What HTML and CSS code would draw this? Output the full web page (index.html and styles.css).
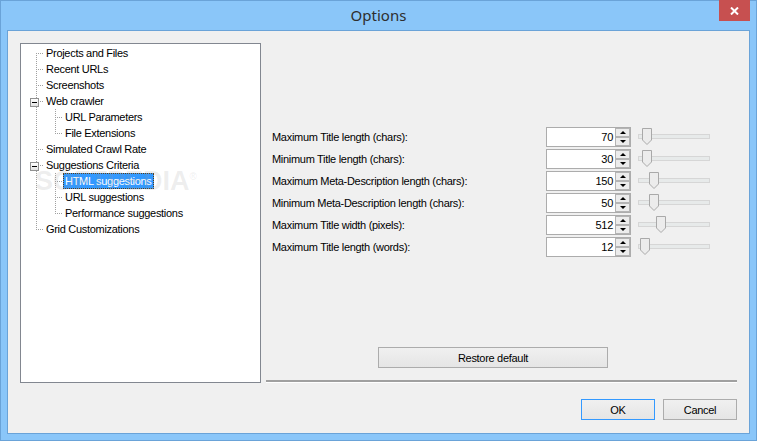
FILE: index.html
```html
<!DOCTYPE html>
<html lang="en">
<head>
<meta charset="UTF-8">
<meta name="viewport" content="width=device-width, initial-scale=1.0">
<title>Options</title>
<link rel="stylesheet" href="styles.css">
</head>
<body>

<div class="window">
    <div class="titlebar">
        <span class="title">Options</span>
        <button class="close" aria-label="Close">
            <svg width="9" height="8" viewBox="0 0 9 8"><path d="M1 0.5 L8 7.5 M8 0.5 L1 7.5" stroke="#fff" stroke-width="2"/></svg>
        </button>
    </div>

    <div class="client">
        <div class="main">
            <div class="tree">
                <div class="tree-row"><span class="guide first"></span><span class="tree-label">Projects and Files</span></div>
                <div class="tree-row"><span class="guide tee"></span><span class="tree-label">Recent URLs</span></div>
                <div class="tree-row"><span class="guide tee"></span><span class="tree-label">Screenshots</span></div>
                <div class="tree-row"><span class="guide tee"><span class="expander"></span></span><span class="tree-label">Web crawler</span></div>
                <div class="tree-row"><span class="guide pipe"></span><span class="guide tee"></span><span class="tree-label">URL Parameters</span></div>
                <div class="tree-row"><span class="guide pipe"></span><span class="guide last"></span><span class="tree-label">File Extensions</span></div>
                <div class="tree-row"><span class="guide tee"></span><span class="tree-label">Simulated Crawl Rate</span></div>
                <div class="tree-row"><span class="guide tee"><span class="expander"></span></span><span class="tree-label">Suggestions Criteria</span></div>
                <div class="tree-row"><span class="guide pipe"></span><span class="guide tee"></span><span class="tree-label selected">HTML suggestions</span></div>
                <div class="tree-row"><span class="guide pipe"></span><span class="guide tee"></span><span class="tree-label">URL suggestions</span></div>
                <div class="tree-row"><span class="guide pipe"></span><span class="guide last"></span><span class="tree-label">Performance suggestions</span></div>
                <div class="tree-row"><span class="guide last"></span><span class="tree-label">Grid Customizations</span></div>

                <span class="watermark">SOFTPEDIA<sup>®</sup></span>
            </div>

            <div class="panel">
                <div class="settings">
                    <div class="setting">
                        <label>Maximum Title length (chars):</label>
                        <div class="spin"><span class="spin-value">70</span><span class="spin-buttons"><span class="spin-btn up"></span><span class="spin-btn down"></span></span></div>
                        <div class="slider"><div class="track"></div><svg class="thumb" style="left: 4px" width="10" height="17" viewBox="0 0 10 17"><path d="M0.5 0.5 H9.5 V12 L5 16.5 L0.5 12 Z" fill="#ececec" stroke="#a9a9a9"/></svg></div>
                    </div>
                    <div class="setting">
                        <label>Minimum Title length (chars):</label>
                        <div class="spin"><span class="spin-value">30</span><span class="spin-buttons"><span class="spin-btn up"></span><span class="spin-btn down"></span></span></div>
                        <div class="slider"><div class="track"></div><svg class="thumb" style="left: 4px" width="10" height="17" viewBox="0 0 10 17"><path d="M0.5 0.5 H9.5 V12 L5 16.5 L0.5 12 Z" fill="#ececec" stroke="#a9a9a9"/></svg></div>
                    </div>
                    <div class="setting">
                        <label>Maximum Meta-Description length (chars):</label>
                        <div class="spin"><span class="spin-value">150</span><span class="spin-buttons"><span class="spin-btn up"></span><span class="spin-btn down"></span></span></div>
                        <div class="slider"><div class="track"></div><svg class="thumb" style="left: 11px" width="10" height="17" viewBox="0 0 10 17"><path d="M0.5 0.5 H9.5 V12 L5 16.5 L0.5 12 Z" fill="#ececec" stroke="#a9a9a9"/></svg></div>
                    </div>
                    <div class="setting">
                        <label>Minimum Meta-Description length (chars):</label>
                        <div class="spin"><span class="spin-value">50</span><span class="spin-buttons"><span class="spin-btn up"></span><span class="spin-btn down"></span></span></div>
                        <div class="slider"><div class="track"></div><svg class="thumb" style="left: 11px" width="10" height="17" viewBox="0 0 10 17"><path d="M0.5 0.5 H9.5 V12 L5 16.5 L0.5 12 Z" fill="#ececec" stroke="#a9a9a9"/></svg></div>
                    </div>
                    <div class="setting">
                        <label>Maximum Title width (pixels):</label>
                        <div class="spin"><span class="spin-value">512</span><span class="spin-buttons"><span class="spin-btn up"></span><span class="spin-btn down"></span></span></div>
                        <div class="slider"><div class="track"></div><svg class="thumb" style="left: 18px" width="10" height="17" viewBox="0 0 10 17"><path d="M0.5 0.5 H9.5 V12 L5 16.5 L0.5 12 Z" fill="#ececec" stroke="#a9a9a9"/></svg></div>
                    </div>
                    <div class="setting">
                        <label>Maximum Title length (words):</label>
                        <div class="spin"><span class="spin-value">12</span><span class="spin-buttons"><span class="spin-btn up"></span><span class="spin-btn down"></span></span></div>
                        <div class="slider"><div class="track"></div><svg class="thumb" style="left: 2px" width="10" height="17" viewBox="0 0 10 17"><path d="M0.5 0.5 H9.5 V12 L5 16.5 L0.5 12 Z" fill="#ececec" stroke="#a9a9a9"/></svg></div>
                    </div>
                </div>

                <button class="btn restore">Restore default</button>
                <div class="separator"></div>
            </div>
        </div>

        <div class="footer">
            <button class="btn default">OK</button>
            <button class="btn">Cancel</button>
        </div>
    </div>
</div>

</body>
</html>
```

FILE: styles.css
```css
body {
    margin: 0;
    font-family: "Liberation Sans", Arial, sans-serif;
    font-size: 11px;
    letter-spacing: -0.3px;
    color: #000;
}

.window {
    width: 757px;
    height: 441px;
    box-sizing: border-box;
    border: 1px solid #6aa3d8;
    background-color: #8ac6f9;
    display: flex;
    flex-direction: column;
}

/* title bar */
.titlebar {
    height: 29px;
    display: grid;
    grid-template-columns: 1fr auto 1fr;
}

.title {
    grid-column: 2;
    font-family: "Noto Sans", sans-serif;
    font-size: 15px;
    line-height: 28px;
    letter-spacing: 0;
    color: #2e2e2e;
}

.close {
    grid-column: 3;
    justify-self: end;
    align-self: start;
    width: 31px;
    height: 21px;
    margin: -1px 6px 0 0;
    padding: 0;
    border: none;
    background-color: #c75050;
    display: flex;
    align-items: center;
    justify-content: center;
}

/* client area */
.client {
    flex: 1;
    margin: 0 6px 6px;
    border: 1px solid #6aa3d8;
    background-color: #f0f0f0;
    padding: 12px 12px 0;
    display: flex;
    flex-direction: column;
}

.main {
    display: flex;
    gap: 5px;
    height: 340px;
}

/* tree */
.tree {
    position: relative;
    width: 241px;
    flex: none;
    box-sizing: border-box;
    border: 1px solid #828790;
    background-color: #fff;
    padding: 1px 0 0 6px;
    overflow: hidden;
}

.tree-row {
    display: flex;
    height: 16px;
}

.guide {
    width: 19px;
    height: 16px;
    flex: none;
    display: flex;
    align-items: center;
    background-repeat: no-repeat;
}

.guide.tee {
    background-image:
        repeating-linear-gradient(to bottom, #a0a0a0 0 1px, transparent 1px 2px),
        repeating-linear-gradient(to right, #a0a0a0 0 1px, transparent 1px 2px);
    background-position: 9px 0, 9px 8px;
    background-size: 1px 16px, 8px 1px;
}

.guide.first {
    background-image:
        repeating-linear-gradient(to bottom, #a0a0a0 0 1px, transparent 1px 2px),
        repeating-linear-gradient(to right, #a0a0a0 0 1px, transparent 1px 2px);
    background-position: 9px 8px, 9px 8px;
    background-size: 1px 8px, 8px 1px;
}

.guide.last {
    background-image:
        repeating-linear-gradient(to bottom, #a0a0a0 0 1px, transparent 1px 2px),
        repeating-linear-gradient(to right, #a0a0a0 0 1px, transparent 1px 2px);
    background-position: 9px 0, 9px 8px;
    background-size: 1px 9px, 8px 1px;
}

.guide.pipe {
    background-image: repeating-linear-gradient(to bottom, #a0a0a0 0 1px, transparent 1px 2px);
    background-position: 9px 0;
    background-size: 1px 16px;
}

.expander {
    width: 9px;
    height: 9px;
    box-sizing: border-box;
    margin: 2px 0 0 3px;
    border: 1px solid #919191;
    background: linear-gradient(#fff, #e2e2e2);
    display: flex;
    align-items: center;
    justify-content: center;
}

.expander::before {
    content: "";
    width: 5px;
    height: 1px;
    background-color: #000;
}

.tree-label {
    line-height: 16px;
    padding: 0 2px;
    margin-left: -2px;
    white-space: nowrap;
}

.tree-label.selected {
    background-color: #3399ff;
    color: #fff;
    outline: 1px dotted #5a3a10;
    outline-offset: -1px;
}

.watermark {
    position: absolute;
    left: 14px;
    top: 124px;
    font-size: 27px;
    font-weight: bold;
    line-height: 1;
    letter-spacing: 0;
    color: rgba(150, 150, 150, 0.16);
    pointer-events: none;
}

.watermark sup {
    font-size: 10px;
    font-weight: normal;
}

/* right panel */
.panel {
    flex: 1;
    display: flex;
    flex-direction: column;
}

.settings {
    margin-top: 84px;
    display: flex;
    flex-direction: column;
    gap: 2px;
}

.setting {
    display: flex;
    height: 20px;
}

.setting label {
    width: 274px;
    padding-left: 6px;
    line-height: 20px;
    white-space: nowrap;
}

.spin {
    width: 85px;
    box-sizing: border-box;
    border: 1px solid #acacac;
    background-color: #fff;
    display: flex;
    margin-right: 7px;
}

.spin-value {
    flex: 1;
    text-align: right;
    padding-right: 2px;
    line-height: 18px;
}

.spin-buttons {
    width: 15px;
    display: flex;
    flex-direction: column;
}

.spin-btn {
    height: 9px;
    box-sizing: border-box;
    border: 1px solid #b4b4b4;
    background-color: #ececec;
    display: flex;
    align-items: center;
    justify-content: center;
}

.spin-btn::before {
    content: "";
    border-left: 3px solid transparent;
    border-right: 3px solid transparent;
}

.spin-btn.up::before {
    border-bottom: 3px solid #000;
}

.spin-btn.down::before {
    border-top: 3px solid #000;
}

.slider {
    position: relative;
    width: 72px;
}

.track {
    margin-top: 7px;
    height: 5px;
    box-sizing: border-box;
    border: 1px solid #d6d6d6;
    background-color: #e7eaea;
}

.thumb {
    position: absolute;
    top: 1px;
}

.btn {
    box-sizing: border-box;
    height: 21px;
    padding: 0;
    border: 1px solid #acacac;
    background: linear-gradient(#f0f0f0, #e5e5e5);
    font-family: inherit;
    font-size: 11px;
    letter-spacing: -0.3px;
    color: #000;
}

.restore {
    margin-top: auto;
    margin-left: 112px;
    width: 230px;
}

.separator {
    margin-top: 12px;
    border-top: 2px solid #a0a0a0;
    border-bottom: 1px solid #fff;
}

.footer {
    margin-top: 16px;
    display: flex;
    justify-content: flex-end;
    gap: 8px;
}

.footer .btn {
    width: 74px;
}

.btn.default {
    border-color: #3399ff;
}
```
